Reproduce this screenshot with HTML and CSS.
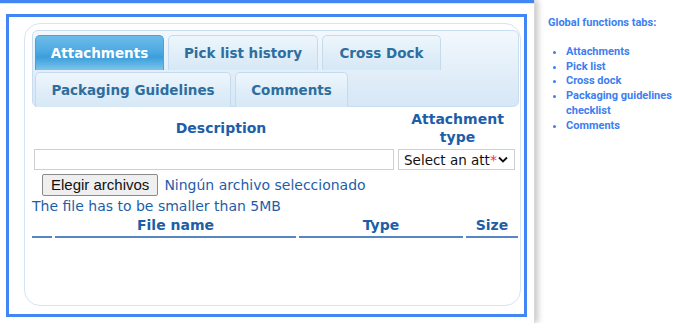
FILE: index.html
```html
<!DOCTYPE html>
<html lang="en">
<head>
    <meta charset="UTF-8">
    <title>Global functions tabs</title>
    <link rel="stylesheet" href="styles.css">
</head>
<body>
    <div class="page">
        <div class="left">
            <div class="topbar"></div>
            <div class="frame">
                <div class="panel">
                    <div class="tabs">
                        <div class="tab active w-att">Attachments</div>
                        <div class="tab w-pick">Pick list history</div>
                        <div class="tab w-cross">Cross Dock</div>
                        <div class="tab w-pack">Packaging Guidelines</div>
                        <div class="tab w-com">Comments</div>
                    </div>

                    <div class="form">
                        <div class="th desc">Description</div>
                        <div class="th">Attachment<br>type</div>
                        <div class="cell"><div class="text-input"></div></div>
                        <div class="cell">
                            <div class="select">
                                <span class="select-text">Select an att</span>
                                <span class="req">*</span>
                                <svg class="chev" width="10" height="7" viewBox="0 0 10 7"><path d="M1 1.5 L5 5.5 L9 1.5" fill="none" stroke="#111" stroke-width="1.8"/></svg>
                            </div>
                        </div>
                    </div>

                    <div class="file-row">
                        <span class="file-btn">Elegir archivos</span>
                        <span class="file-name">Ningún archivo seleccionado</span>
                    </div>
                    <div class="note">The file has to be smaller than 5MB</div>

                    <div class="files">
                        <div class="fh"></div>
                        <div class="fh">File name</div>
                        <div class="fh">Type</div>
                        <div class="fh">Size</div>
                    </div>
                </div>
            </div>
        </div>

        <div class="side">
            <p class="side-title">Global functions tabs:</p>
            <ul class="side-list">
                <li>Attachments</li>
                <li>Pick list</li>
                <li>Cross dock</li>
                <li>Packaging guidelines checklist</li>
                <li>Comments</li>
            </ul>
        </div>
    </div>
</body>
</html>
```

FILE: styles.css
```css
body {
    margin: 0;
    background: #ffffff;
    font-family: "DejaVu Sans", Verdana, sans-serif;
    overflow: hidden;
}

.page {
    display: flex;
    height: 323px;
}

/* linke Spalte mit Schatten */
.left {
    width: 535px;
    height: 323px;
    flex-shrink: 0;
    box-shadow: 3px 0 6px rgba(0, 0, 0, 0.22);
    border-right: 1px solid #d8d8d8;
    box-sizing: border-box;
}

.topbar {
    height: 3px;
    background: #4285f4;
    border-bottom: 1px solid #e4e4e4;
}

.frame {
    margin: 10px 0 0 6px;
    width: 521px;
    height: 303px;
    box-sizing: border-box;
    border: 3px solid #4285f4;
    padding: 6px 0 0 15px;
}

.panel {
    width: 497px;
    height: 283px;
    box-sizing: border-box;
    border: 1px solid #d3e5f6;
    border-radius: 16px;
    padding: 6px 0 0 7px;
}

/* Reiter */
.tabs {
    width: 487px;
    height: 77px;
    box-sizing: border-box;
    display: flex;
    flex-wrap: wrap;
    align-content: flex-start;
    gap: 2px 4px;
    padding: 4px 2px 0;
    border: 1px solid #c8ddf0;
    border-radius: 6px;
    background: linear-gradient(to bottom, #f3f8fd 0%, #e2eef9 55%, #d6e7f6 100%);
}

.tab {
    height: 35px;
    box-sizing: border-box;
    display: flex;
    align-items: center;
    justify-content: center;
    white-space: nowrap;
    font-size: 13.5px;
    font-weight: bold;
    color: #2e6e9e;
    border: 1px solid #c5dbec;
    border-bottom: none;
    border-radius: 5px 5px 0 0;
    background: linear-gradient(to bottom, #eef6fc 0%, #e1eef9 50%, #d6e8f6 100%);
}

.w-att { width: 129px; }
.w-pick { width: 150px; }
.w-cross { width: 119px; }
.w-pack { width: 196px; }
.w-com { width: 113px; }

.tab.active {
    color: #ffffff;
    border-color: #4aa2d9;
    background: linear-gradient(to bottom, #6dbbe8 0%, #4eaae1 45%, #3a9edb 62%, #7cc4ec 100%);
}

/* Formular */
.form {
    width: 485px;
    margin-top: 1px;
    display: grid;
    grid-template-columns: 364px 119px;
    column-gap: 2px;
}

.th {
    height: 39px;
    display: flex;
    align-items: center;
    justify-content: center;
    text-align: center;
    font-size: 14px;
    font-weight: bold;
    line-height: 18px;
    color: #1d5ea8;
}

.th.desc {
    padding-left: 14px;
}

.cell {
    height: 26px;
    padding-top: 2px;
    box-sizing: border-box;
}

.text-input {
    margin-left: 2px;
    width: 360px;
    height: 21px;
    box-sizing: border-box;
    border: 1px solid #cfcfcf;
    background: #ffffff;
}

.select {
    width: 117px;
    height: 21px;
    box-sizing: border-box;
    border: 1px solid #cfcfcf;
    display: flex;
    align-items: center;
    padding-left: 5px;
    font-size: 13.5px;
    color: #111111;
}

.select-text {
    white-space: nowrap;
}

.req {
    color: #ee3344;
    font-size: 14px;
}

.chev {
    margin-left: 1px;
    flex-shrink: 0;
}

.file-row {
    display: flex;
    align-items: center;
    gap: 6px;
    padding-left: 10px;
    height: 23px;
}

.file-btn {
    height: 22px;
    box-sizing: border-box;
    padding: 0 8px;
    display: flex;
    align-items: center;
    font-family: "Liberation Sans", Arial, sans-serif;
    font-size: 15px;
    color: #111111;
    background: #efefef;
    border: 1px solid #8a8a8a;
    border-radius: 2px;
}

.file-name,
.note {
    font-size: 14px;
    color: #1d5ea8;
}

.note {
    line-height: 19px;
    margin-top: 1px;
}

.files {
    width: 486px;
    margin-top: 1px;
    display: grid;
    grid-template-columns: 20px 241px 164px 52px;
    column-gap: 3px;
}

.fh {
    height: 19px;
    line-height: 17px;
    text-align: center;
    font-size: 14px;
    font-weight: bold;
    color: #1d5ea8;
    border-bottom: 2px solid #5687c2;
}

/* rechte Spalte */
.side {
    padding: 15px 0 0 13px;
    font-family: Roboto, "Noto Sans", sans-serif;
    font-weight: bold;
    font-size: 11px;
    color: #3d7ef0;
}

.side-title {
    margin: 0 0 15px;
    line-height: 15px;
}

.side-list {
    margin: 0;
    padding-left: 18px;
    width: 120px;
    line-height: 14.7px;
}
```
